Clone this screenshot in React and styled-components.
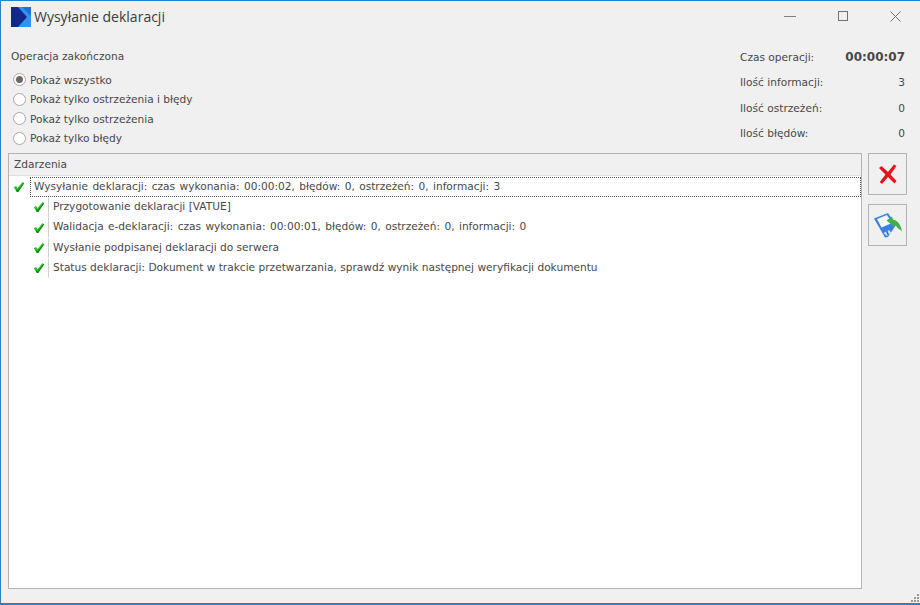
import React from 'react';
import styled, { createGlobalStyle } from 'styled-components';

const GlobalStyle = createGlobalStyle`
  html, body { margin: 0; padding: 0; background: #f0f0f0; }
  body { font-family: "DejaVu Sans", sans-serif; font-size: 10.6px; color: #484848; }
`;

const Win = styled.div`
  position: relative;
  box-sizing: border-box;
  width: 920px;
  height: 605px;
  display: flex;
  flex-direction: column;
  background: #f0f0f0;
  border: 1px solid #2f7fc0;
  border-width: 1px 0 2px 1px;
  border-top-color: #1a84d0;
`;
const TitleBar = styled.div`
  display: flex;
  align-items: center;
  height: 31px;
  padding: 0 0 0 10px;
  flex: none;
`;
const Title = styled.div`
  font-family: "Open Sans", sans-serif;
  font-size: 14px;
  color: #3c3c3c;
  margin-left: 3px;
  flex: 1;
`;
const WinBtn = styled.div`
  box-sizing: border-box;
  width: 52px;
  display: flex;
  justify-content: center;
  padding-left: ${p => p.shift || 0}px;
`;
const Top = styled.div`
  display: flex;
  justify-content: space-between;
  height: 121px;
  flex: none;
  padding: 0 15px 0 10px;
`;
const Group = styled.div`
  padding-top: 16px;
`;
const GroupLabel = styled.div`
  height: 22px;
  line-height: 16px;
`;
const RadioRow = styled.div`
  display: flex;
  align-items: center;
  height: 19.5px;
  padding-left: 2px;
  gap: 4px;
`;
const Dot = styled.span`
  box-sizing: border-box;
  width: 13px;
  height: 13px;
  border-radius: 50%;
  border: 1px solid #a8a8a8;
  background: #fff;
  display: flex;
  align-items: center;
  justify-content: center;
  &::after {
    content: '';
    display: ${p => (p.checked ? 'block' : 'none')};
    width: 7px;
    height: 7px;
    border-radius: 50%;
    background: #6a6a6a;
  }
`;
const Stats = styled.div`
  width: 165px;
  padding-top: 12px;
`;
const Stat = styled.div`
  display: flex;
  justify-content: space-between;
  align-items: center;
  height: 25.5px;
`;
const Strong = styled.span`
  font-weight: 700;
  font-size: 12px;
`;
const Main = styled.div`
  flex: 1;
  display: flex;
  padding: 0 13px 14px 7px;
  gap: 6px;
  min-height: 0;
`;
const Panel = styled.div`
  box-sizing: border-box;
  flex: 1;
  display: flex;
  flex-direction: column;
  border: 1px solid #b4b4b4;
  border-bottom-color: #b0b8b0;
  background: #fff;
`;
const PanelHead = styled.div`
  height: 21px;
  line-height: 20px;
  padding-left: 5px;
  background: #f0f0f0;
  border-bottom: 1px solid #e0e0e0;
  flex: none;
`;
const Tree = styled.div`
  padding-top: 1px;
`;
const Row = styled.div`
  display: flex;
  align-items: center;
  height: 20.25px;
  padding-left: ${p => (p.child ? 24 : 4)}px;
`;
const RowText = styled.div`
  flex: ${p => (p.selected ? 1 : 'none')};
  height: 20px;
  line-height: 16px;
  box-sizing: border-box;
  padding-left: 3px;
  margin-left: 5px;
  border: 1px solid transparent;
  word-spacing: ${p => (p.numeric ? 1 : 0)}px;
  ${p => p.selected && 'border: 1px dotted #555;'}
  ${p => p.child && 'border-left: 1px solid #d0d0d0; padding-left: 4px; margin-left: 3px; height: 20.5px;'}
`;
const Side = styled.div`
  display: flex;
  flex-direction: column;
  gap: 9px;
`;
const ToolBtn = styled.div`
  box-sizing: border-box;
  width: 39px;
  height: 42px;
  border: 1px solid #b4b4b4;
  background: #f0f0f0;
  display: flex;
  align-items: center;
  justify-content: center;
`;
const Grip = styled.svg`
  position: absolute;
  right: 1px;
  bottom: 0;
`;

const Check = () => (
  <svg width="12" height="12" viewBox="0 0 12 12" style={{ flex: 'none' }}>
    <path d="M0.8 6.3 L3 5 L4.6 7 L9.6 1 L11.2 2.2 L5.2 11 L3.8 11 Z" fill="#2cc62c" />
    <path d="M3.8 11 L5.2 11 L11.2 2.2 L10.6 1.7 L4.6 9 L2.4 7.6 Z" fill="#108a10" />
  </svg>
);

const Logo = () => (
  <svg width="20" height="20" viewBox="0 0 20 20">
    <rect width="20" height="20" fill="#2f93f5" />
    <path d="M11 0H20V9Z" fill="#1f6fd8" />
    <path d="M0 0H7L16 10 7 20H0Z" fill="#14278a" />
  </svg>
);

const rows = [
  { text: 'Przygotowanie deklaracji [VATUE]' },
  { text: 'Walidacja e-deklaracji: czas wykonania: 00:00:01, błędów: 0, ostrzeżeń: 0, informacji: 0', numeric: true },
  { text: 'Wysłanie podpisanej deklaracji do serwera' },
  { text: 'Status deklaracji: Dokument w trakcie przetwarzania, sprawdź wynik następnej weryfikacji dokumentu' },
];
const radios = ['Pokaż wszystko', 'Pokaż tylko ostrzeżenia i błędy', 'Pokaż tylko ostrzeżenia', 'Pokaż tylko błędy'];
const stats = [
  ['Czas operacji:', <Strong>00:00:07</Strong>],
  ['Ilość informacji:', '3'],
  ['Ilość ostrzeżeń:', '0'],
  ['Ilość błędów:', '0'],
];

export default function App() {
  return (
    <Win>
      <GlobalStyle />
      <TitleBar>
        <Logo />
        <Title>Wysyłanie deklaracji</Title>
        <WinBtn>
          <svg width="12" height="11"><path d="M0 5.5H12" stroke="#808080" /></svg>
        </WinBtn>
        <WinBtn shift={2}>
          <svg width="11" height="11"><rect x="0.5" y="0.5" width="9" height="9" fill="none" stroke="#707070" /></svg>
        </WinBtn>
        <WinBtn shift={2}>
          <svg width="11" height="11"><path d="M0.5 0.5L10.5 10.5M10.5 0.5L0.5 10.5" stroke="#707070" /></svg>
        </WinBtn>
      </TitleBar>
      <Top>
        <Group>
          <GroupLabel>Operacja zakończona</GroupLabel>
          {radios.map((r, i) => (
            <RadioRow key={r}>
              <Dot checked={i === 0} />
              {r}
            </RadioRow>
          ))}
        </Group>
        <Stats>
          {stats.map(([label, value]) => (
            <Stat key={label}>
              <span>{label}</span>
              <span>{value}</span>
            </Stat>
          ))}
        </Stats>
      </Top>
      <Main>
        <Panel>
          <PanelHead>Zdarzenia</PanelHead>
          <Tree>
            <Row>
              <Check />
              <RowText selected numeric>Wysyłanie deklaracji: czas wykonania: 00:00:02, błędów: 0, ostrzeżeń: 0, informacji: 3</RowText>
            </Row>
            {rows.map(r => (
              <Row child key={r.text}>
                <Check />
                <RowText child numeric={r.numeric}>{r.text}</RowText>
              </Row>
            ))}
          </Tree>
        </Panel>
        <Side>
          <ToolBtn>
            <svg width="22" height="22" viewBox="0 0 22 22">
              <path d="M2 5 L4.5 3 L11 9 L17 1.5 L19.5 3 L13.5 11.5 L19.5 18 L17.5 20.5 L11 14 L5 21 L2.8 19 L8.5 11.5 Z" fill="#e4141c" />
            </svg>
          </ToolBtn>
          <ToolBtn>
            <svg width="30" height="28" viewBox="0 0 30 28">
              <path d="M1 7.5 L15 2 L23 14 L15 26 L12 26.5 Z" fill="#3a7fe6" />
              <path d="M4 8 L14 4 L19 12 L8.5 16.5 Z" fill="#f6f8fb" />
              <path d="M10.5 22 L16 19 L18.5 22 L14 25 Z" fill="#cfe2f8" />
              <path d="M13 20.5 L14.5 19.8 L16 23.8 L14.6 24.6 Z" fill="#2f6fd8" />
              <path d="M13.5 9.5 L19 5.5 L20 8.5 C24.5 9.5 27.5 13 29 20 L24.5 17 C23.5 15 22.5 14.5 21.5 14 L22 16.5 Z" fill="#3fb04a" />
            </svg>
          </ToolBtn>
        </Side>
      </Main>
      <Grip width="10" height="10">
        <path d="M8 1h2v2H8zM5 4h2v2H5zM8 4h2v2H8zM2 7h2v2H2zM5 7h2v2H5zM8 7h2v2H8z" fill="#9a9a9a" />
      </Grip>
    </Win>
  );
}
